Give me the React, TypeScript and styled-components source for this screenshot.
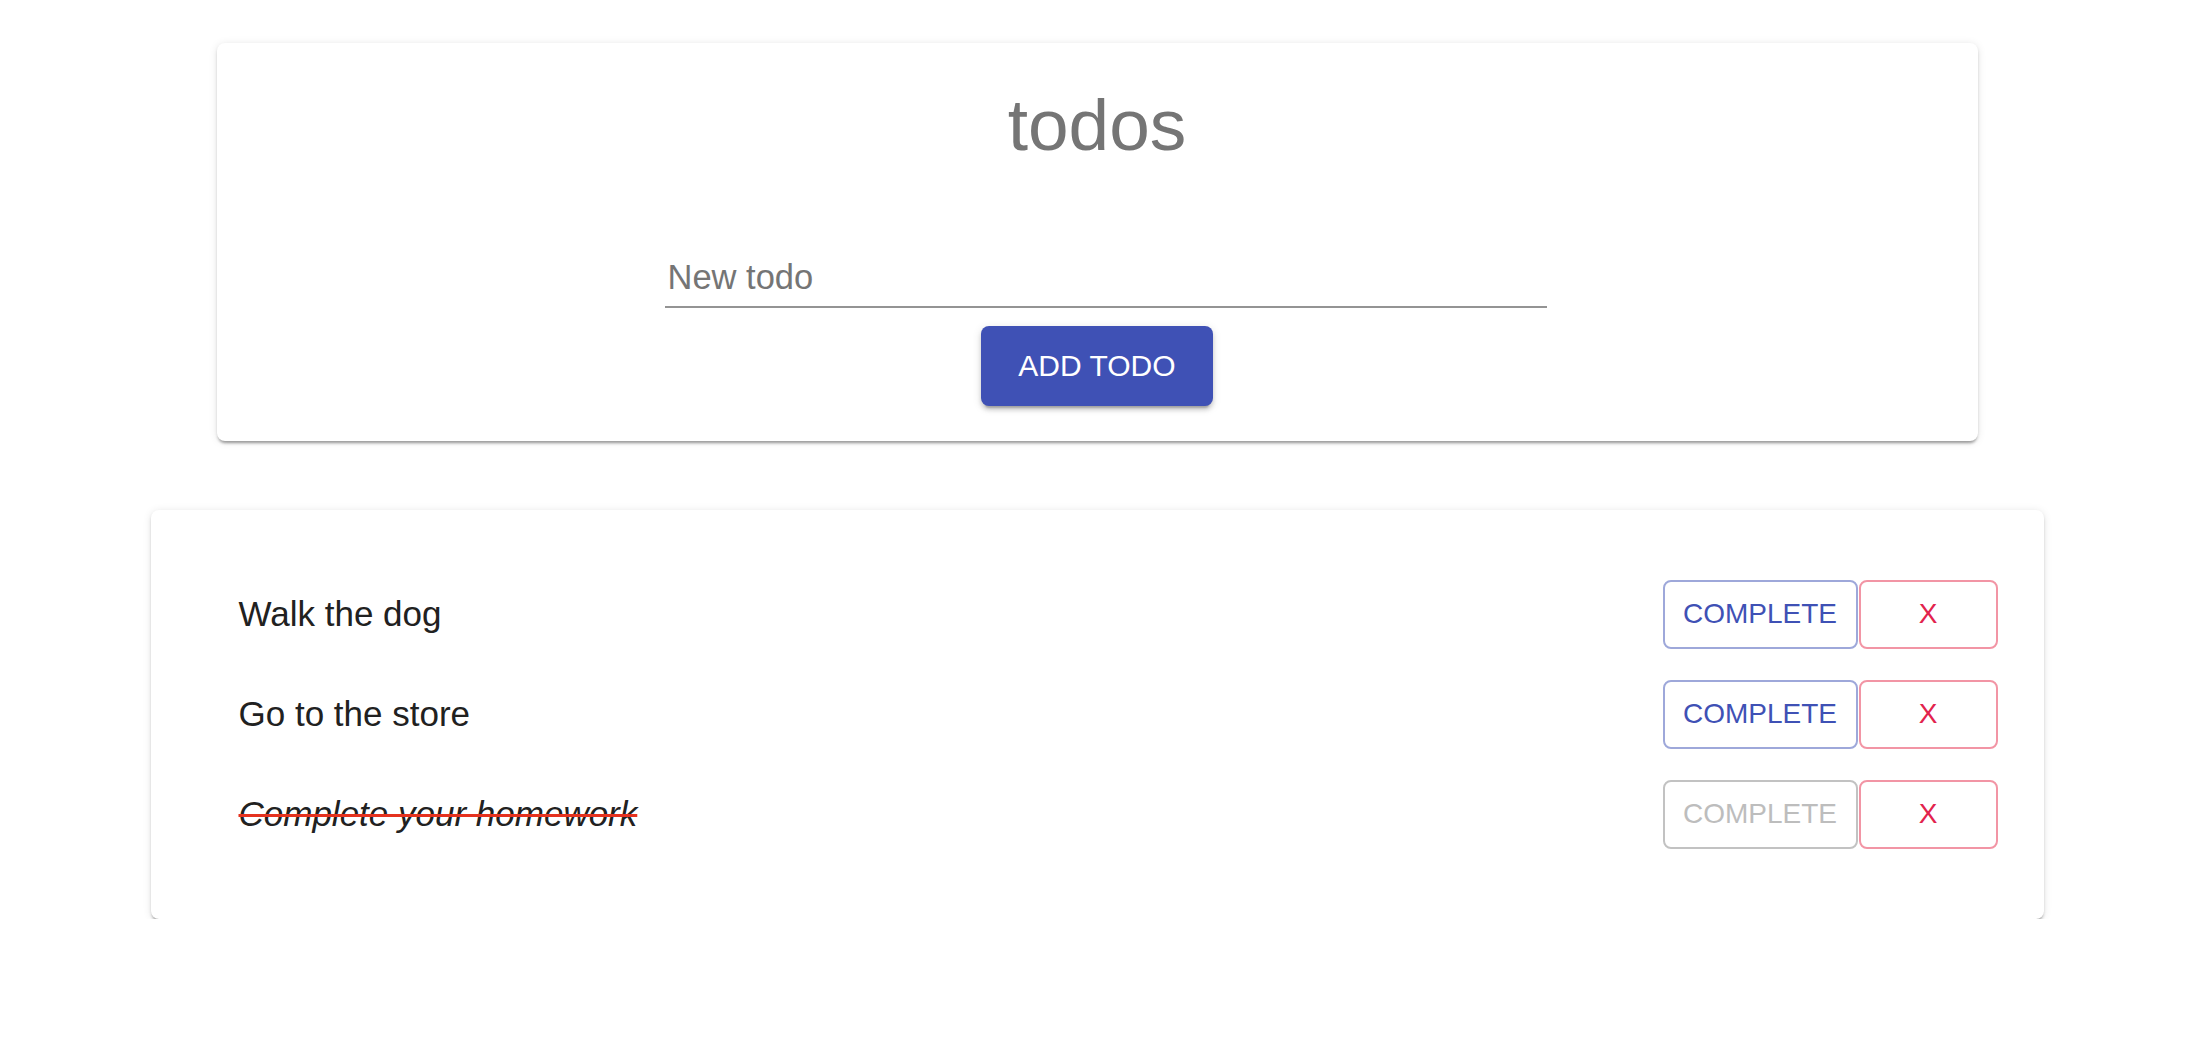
import React from "react";
import styled, { createGlobalStyle } from "styled-components";

const GlobalStyle = createGlobalStyle`
  body {
    margin: 0;
    background: #ffffff;
    font-family: "Liberation Sans", Arial, Helvetica, sans-serif;
  }
`;

const Page = styled.div`
  display: flex;
  flex-direction: column;
  align-items: center;
  gap: 69px;
  padding-top: 43px;
`;

const Card = styled.div<{ $width: number }>`
  width: ${(props) => props.$width}px;
  box-sizing: border-box;
  background: #ffffff;
  border-radius: 8px;
  box-shadow: 0 4px 3px -2px rgba(0, 0, 0, 0.28), 0 2px 3px rgba(0, 0, 0, 0.12),
    0 1px 8px rgba(0, 0, 0, 0.1);
`;

const HeaderCard = styled(Card)`
  display: flex;
  flex-direction: column;
  align-items: center;
  padding: 39px 0 35px;
`;

const Title = styled.h1`
  margin: 0;
  font-size: 73px;
  line-height: 86px;
  font-weight: 400;
  color: #757575;
`;

const TodoInput = styled.input`
  width: 879px;
  height: 41px;
  margin: 89px 0 0 17px;
  padding: 0 0 8px 3px;
  box-sizing: content-box;
  border: none;
  border-bottom: 2px solid #949494;
  outline: none;
  font-family: inherit;
  font-size: 34.5px;
  line-height: 41px;
  color: #212121;
  background: transparent;

  &::placeholder {
    color: #757575;
    opacity: 1;
  }
`;

const AddButton = styled.button`
  margin-top: 18px;
  width: 232px;
  height: 80px;
  border: none;
  border-radius: 8px;
  background: #3f51b5;
  color: #ffffff;
  font-family: inherit;
  font-size: 30px;
  letter-spacing: 0;
  cursor: pointer;
  box-shadow: 0 6px 2px -4px rgba(0, 0, 0, 0.2), 0 4px 4px rgba(0, 0, 0, 0.14),
    0 2px 10px rgba(0, 0, 0, 0.12);
`;

const List = styled.ul`
  list-style: none;
  margin: 0;
  padding: 54px 46px 55px 88px;
`;

const Row = styled.li`
  display: flex;
  align-items: center;
  justify-content: space-between;
  height: 100px;
`;

const ItemText = styled.span<{ $done: boolean }>`
  font-size: 35px;
  color: #212121;
  font-style: ${(props) => (props.$done ? "italic" : "normal")};
  text-decoration: ${(props) => (props.$done ? "line-through" : "none")};
  text-decoration-color: #e5321f;
  text-decoration-thickness: 3px;
`;

const Actions = styled.div`
  display: flex;
  gap: 1px;
`;

const OutlineButton = styled.button<{ $tone: "primary" | "danger"; $width: number }>`
  width: ${(props) => props.$width}px;
  height: 69px;
  box-sizing: border-box;
  border-radius: 8px;
  background: #ffffff;
  font-family: inherit;
  font-size: 28px;
  padding: 0;
  cursor: pointer;
  border: 2px solid
    ${(props) => (props.$tone === "primary" ? "#9ea8da" : "#f295a5")};
  color: ${(props) => (props.$tone === "primary" ? "#3f51b5" : "#e2234d")};

  &:disabled {
    border-color: #c2c2c2;
    color: #bdbdbd;
    cursor: default;
  }
`;

const todos = [
  { id: 1, text: "Walk the dog", done: false },
  { id: 2, text: "Go to the store", done: false },
  { id: 3, text: "Complete your homework", done: true },
];

const App: React.FC = () => {
  return (
    <>
      <GlobalStyle />
      <Page>
        <HeaderCard $width={1761}>
          <Title>todos</Title>
          <TodoInput placeholder="New todo" />
          <AddButton>ADD TODO</AddButton>
        </HeaderCard>
        <Card $width={1893}>
          <List>
            {todos.map((todo) => (
              <Row key={todo.id}>
                <ItemText $done={todo.done}>{todo.text}</ItemText>
                <Actions>
                  <OutlineButton $tone="primary" $width={195} disabled={todo.done}>
                    COMPLETE
                  </OutlineButton>
                  <OutlineButton $tone="danger" $width={139}>
                    X
                  </OutlineButton>
                </Actions>
              </Row>
            ))}
          </List>
        </Card>
      </Page>
    </>
  );
};

export default App;
